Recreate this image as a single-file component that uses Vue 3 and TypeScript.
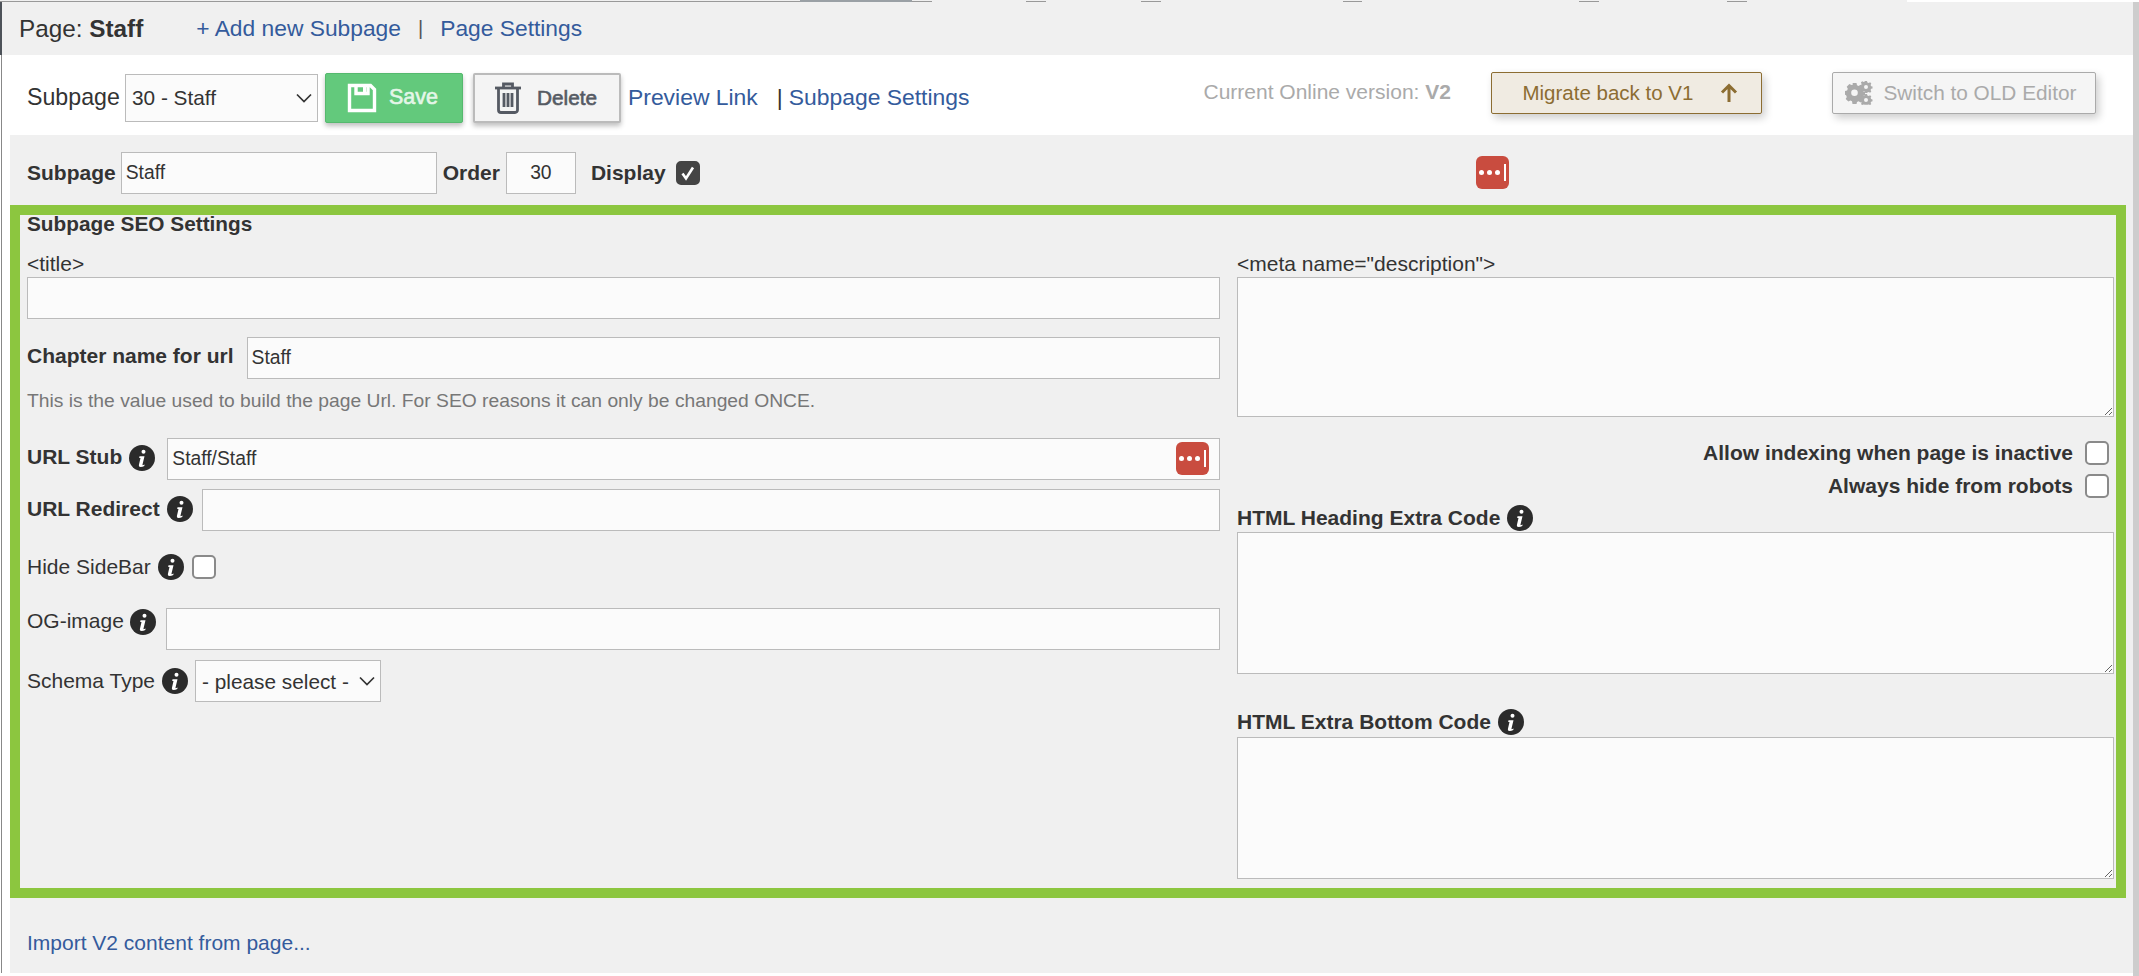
<script setup lang="ts">
interface Seg { width: number; color: string; height: number }
const strip: Seg[] = [
  { width: 800, color: '#999', height: 1 },
  { width: 112, color: '#9aa0a5', height: 2 },
  { width: 20, color: '#999', height: 1 },
  { width: 94, color: 'transparent', height: 1 },
  { width: 20, color: '#999', height: 1 },
  { width: 95, color: 'transparent', height: 1 },
  { width: 20, color: '#999', height: 1 },
  { width: 182, color: 'transparent', height: 1 },
  { width: 19, color: '#999', height: 1 },
  { width: 217, color: 'transparent', height: 1 },
  { width: 20, color: '#999', height: 1 },
  { width: 128, color: 'transparent', height: 1 },
  { width: 20, color: '#999', height: 1 },
  { width: 160, color: 'transparent', height: 1 },
  { width: 232, color: '#fff', height: 2 }
]
</script>

<template>
  <div class="shell">
    <div class="main">
      <div class="strip">
        <span v-for="(s, i) in strip" :key="i" :style="{ width: s.width + 'px', height: s.height + 'px', background: s.color }"></span>
      </div>
      <header class="head">
        <span class="page-name">Page: <b>Staff</b></span>
        <a class="link add">+ Add new Subpage</a>
        <span class="sep">|</span>
        <a class="link">Page Settings</a>
      </header>
      <div class="content">
        <div class="toolbar">
          <span class="tb-label">Subpage</span>
          <select class="sel sub-sel"><option>30 - Staff</option></select>
          <button class="btn save">
            <svg width="30" height="30" viewBox="0 0 30 30" fill="none" stroke="#fff" stroke-width="3.400">
              <path d="M2.500 2.500h21l4 4v21h-25z" />
              <path d="M9 2.500v8h12v-8" />
              <rect x="16" y="3" width="3" height="6" fill="#fff" stroke="none" />
            </svg>
            <span>Save</span>
          </button>
          <button class="btn del">
            <svg width="28" height="32" viewBox="0 0 28 32" fill="none" stroke="currentColor" stroke-width="2.8">
              <path d="M1 6h26" />
              <path d="M9.500 5V2h9v3" />
              <path d="M4.500 6.500v21.500a2.500 2.500 0 0 0 2.500 2.500h14a2.500 2.500 0 0 0 2.500-2.500V6.500" />
              <path d="M10 11v14M14 11v14M18 11v14" />
            </svg>
            <span>Delete</span>
          </button>
          <a class="link big preview">Preview Link</a>
          <span class="big pipe">|</span>
          <a class="link big">Subpage Settings</a>
          <span class="version">Current Online version: <b>V2</b></span>
          <button class="btn2 migrate">
            <span>Migrate back to V1</span>
            <svg width="20" height="20" viewBox="0 0 20 20" fill="none" stroke="currentColor" stroke-width="3">
              <path d="M10 19V3M3 9.500l7-7 7 7" />
            </svg>
          </button>
          <button class="btn2 switch">
            <svg width="28" height="24" viewBox="0 0 28 24" fill="currentColor">
              <path fill-rule="evenodd" d="M7.500 4h4l.5 2.200 1.600.7 2-1.100 2.700 2.800-1.100 1.900.7 1.700 2.100.5v3.800l-2.100.6-.7 1.600 1.100 2-2.700 2.700-2-1.100-1.600.7-.5 2.100h-4L7 22.200l-1.600-.7-2 1.100L.7 19.900l1.100-2-.7-1.600L0 15.700v-3.800l2.100-.5.700-1.700-1.100-1.900 2.700-2.800 2 1.100L8 5.400z M9.500 10.500a3.300 3.300 0 1 0 0 6.600 3.300 3.300 0 0 0 0-6.600z" transform="translate(0 -2)" />
              <path fill-rule="evenodd" d="M22 0l.4 1.500 1.300.5 1.400-.7 1.200 1.300-.7 1.300.5 1.300 1.400.4v1.800l-1.400.4-.5 1.300.7 1.300-1.200 1.300-1.400-.7-1.300.5L22 12h-1.800l-.4-1.500-1.300-.5-1.300.7-1.300-1.300.7-1.300-.5-1.300-1.200-.4V4.600l1.200-.4.5-1.300-.7-1.300 1.300-1.300 1.300.7 1.300-.5.400-1.500z M21 4a2 2 0 1 0 0 4 2 2 0 0 0 0-4z" />
              <path fill-rule="evenodd" d="M22 13l.4 1.400 1.300.5 1.400-.7 1.200 1.300-.7 1.300.5 1.300 1.400.4v1.800l-1.400.4-.5 1.200.7 1.100-1.200 1-1.400-.6-1.300.4H20l-1.500-.4-1.300.6-1.300-1 .7-1.100-.5-1.200-1.200-.4v-1.800l1.200-.4.5-1.300-.7-1.300 1.300-1.300 1.300.7 1.300-.5.400-1.400z M21 17a2 2 0 1 0 0 4 2 2 0 0 0 0-4z" />
            </svg>
            <span>Switch to OLD Editor</span>
          </button>
        </div>
        <div class="body">
          <div class="meta-row">
            <b class="lbl">Subpage</b>
            <input class="field name" value="Staff" />
            <b class="lbl order-lbl">Order</b>
            <input class="field order" value="30" />
            <b class="lbl display-lbl">Display</b>
            <span class="check on">
              <svg width="16" height="16" viewBox="0 0 16 16" fill="none" stroke="#fff" stroke-width="2.600"><path d="M2.500 8.500l3.500 5 7-11" /></svg>
            </span>
            <span class="dots meta-dots"><i></i><i></i><i></i><em></em></span>
          </div>
          <section class="seo">
            <h2>Subpage SEO Settings</h2>
            <div class="cols">
              <div class="col">
                <div class="lbl-line first">&lt;title&gt;</div>
                <input class="field wide tight" />
                <div class="row chapter">
                  <b class="lbl">Chapter name for url</b>
                  <input class="field grow" value="Staff" />
                </div>
                <p class="hint">This is the value used to build the page Url. For SEO reasons it can only be changed ONCE.</p>
                <div class="row stub">
                  <b class="lbl">URL Stub</b>
                  <svg class="info" viewBox="0 0 26 26"><circle cx="13" cy="13" r="13" /><circle cx="14.500" cy="6.800" r="2" fill="#fff" /><path d="M10.500 11.200h5l-2 8.300q-.2 1 .9.600l1.200-.5-.3 1.400q-2 1-3.600 1-2.300 0-1.700-2.500l1.500-6.600h-1.300z" fill="#fff" /></svg>
                  <div class="stub-wrap">
                    <input class="field wide" value="Staff/Staff" />
                    <span class="dots over"><i></i><i></i><i></i><em></em></span>
                  </div>
                </div>
                <div class="row redirect">
                  <b class="lbl">URL Redirect</b>
                  <svg class="info" viewBox="0 0 26 26"><circle cx="13" cy="13" r="13" /><circle cx="14.500" cy="6.800" r="2" fill="#fff" /><path d="M10.500 11.200h5l-2 8.300q-.2 1 .9.600l1.200-.5-.3 1.400q-2 1-3.600 1-2.300 0-1.700-2.500l1.500-6.600h-1.300z" fill="#fff" /></svg>
                  <input class="field grow" />
                </div>
                <div class="row hide">
                  <span class="lbl">Hide SideBar</span>
                  <svg class="info" viewBox="0 0 26 26"><circle cx="13" cy="13" r="13" /><circle cx="14.500" cy="6.800" r="2" fill="#fff" /><path d="M10.500 11.200h5l-2 8.300q-.2 1 .9.600l1.200-.5-.3 1.400q-2 1-3.600 1-2.300 0-1.700-2.500l1.500-6.600h-1.300z" fill="#fff" /></svg>
                  <span class="check"></span>
                </div>
                <div class="row og">
                  <span class="lbl">OG-image</span>
                  <svg class="info" viewBox="0 0 26 26"><circle cx="13" cy="13" r="13" /><circle cx="14.500" cy="6.800" r="2" fill="#fff" /><path d="M10.500 11.200h5l-2 8.300q-.2 1 .9.600l1.200-.5-.3 1.400q-2 1-3.600 1-2.300 0-1.700-2.500l1.500-6.600h-1.300z" fill="#fff" /></svg>
                  <input class="field grow" />
                </div>
                <div class="row schema">
                  <span class="lbl">Schema Type</span>
                  <svg class="info" viewBox="0 0 26 26"><circle cx="13" cy="13" r="13" /><circle cx="14.500" cy="6.800" r="2" fill="#fff" /><path d="M10.500 11.200h5l-2 8.300q-.2 1 .9.600l1.200-.5-.3 1.400q-2 1-3.600 1-2.300 0-1.700-2.500l1.500-6.600h-1.300z" fill="#fff" /></svg>
                  <select class="sel schema-sel"><option>- please select -</option></select>
                </div>
              </div>
              <div class="col">
                <div class="lbl-line first">&lt;meta name="description"&gt;</div>
                <textarea class="field area a1"></textarea>
                <div class="toggle t1"><b class="lbl">Allow indexing when page is inactive</b><span class="check"></span></div>
                <div class="toggle t2"><b class="lbl">Always hide from robots</b><span class="check"></span></div>
                <div class="row code c1">
                  <b class="lbl">HTML Heading Extra Code</b>
                  <svg class="info" viewBox="0 0 26 26"><circle cx="13" cy="13" r="13" /><circle cx="14.500" cy="6.800" r="2" fill="#fff" /><path d="M10.500 11.200h5l-2 8.300q-.2 1 .9.600l1.200-.5-.3 1.400q-2 1-3.600 1-2.300 0-1.700-2.500l1.500-6.600h-1.300z" fill="#fff" /></svg>
                </div>
                <textarea class="field area a2"></textarea>
                <div class="row code c2">
                  <b class="lbl">HTML Extra Bottom Code</b>
                  <svg class="info" viewBox="0 0 26 26"><circle cx="13" cy="13" r="13" /><circle cx="14.500" cy="6.800" r="2" fill="#fff" /><path d="M10.500 11.200h5l-2 8.300q-.2 1 .9.600l1.200-.5-.3 1.400q-2 1-3.600 1-2.300 0-1.700-2.500l1.500-6.600h-1.300z" fill="#fff" /></svg>
                </div>
                <textarea class="field area a3"></textarea>
              </div>
            </div>
          </section>
          <div class="foot"><a class="link import">Import V2 content from page...</a></div>
        </div>
      </div>
    </div>
    <div class="rail"></div>
  </div>
</template>

<style>
html, body { margin: 0; background: #fff; overflow: hidden; }
</style>

<style scoped>
.shell {
  display: flex;
  width: 2139px;
  height: 976px;
  overflow: hidden;
  font-family: "Liberation Sans", Arial, sans-serif;
  font-size: 21px;
  color: #333;
}
.main { width: 2133px; flex: none; }
.rail { width: 6px; flex: none; background: #cdcdcd; margin-top: 2px; }
.strip { display: flex; align-items: flex-end; height: 2px; background: #f0f0f0; }
.strip span { display: block; flex: none; }
.head {
  height: 53px;
  background: #f0f0f0;
  border-left: 2px solid #4d5259;
  box-sizing: border-box;
  padding-left: 17px;
  display: flex;
  align-items: center;
  font-size: 22.800px;
}
.page-name { color: #333; font-size: 24.300px; }
.add { margin-left: 53px; }
.sep { margin: 0 17px 0 17px; font-size: 20px; color: #555; }
.link { color: #345b9c; text-decoration: none; }
.content { border-left: 1px solid #888; margin-left: 1px; }
.toolbar {
  height: 80px;
  box-sizing: border-box;
  display: flex;
  align-items: center;
  padding: 5px 0 0 25px;
  background: #fff;
}
.tb-label { font-size: 23.200px; width: 98px; flex: none; }
.sel {
  height: 48px;
  box-sizing: border-box;
  border: 1px solid #bbb;
  background-color: #fbfbfb;
  background-image: url("data:image/svg+xml,%3Csvg xmlns='http://www.w3.org/2000/svg' width='16' height='10' viewBox='0 0 16 10'%3E%3Cpath d='M1 1.500l7 7 7-7' fill='none' stroke='%23333' stroke-width='1.700'/%3E%3C/svg%3E");
  background-repeat: no-repeat;
  background-position: right 5px center;
  appearance: none;
  font-family: "Liberation Sans", Arial, sans-serif;
  font-size: 20.800px;
  color: #333;
  border-radius: 0;
  padding: 0 24px 0 6px;
}
.sub-sel { width: 193px; flex: none; }
.btn {
  height: 50px;
  box-sizing: border-box;
  display: flex;
  align-items: center;
  font-family: "Liberation Sans", Arial, sans-serif;
  font-weight: normal;
  border-radius: 2px;
  box-shadow: 0 3px 5px rgba(0, 0, 0, .25);
  padding: 0;
  flex: none;
}
.save {
  width: 138px;
  margin-left: 7px;
  background: #63c97c;
  border: 1px solid #55b96e;
  color: #e4f6e8;
  padding-left: 21px;
  gap: 12px;
  font-size: 21.500px;
  -webkit-text-stroke: .6px #e4f6e8;
}
.del {
  width: 148px;
  margin-left: 10px;
  background: #f4f4f4;
  border: 2px solid #bbb;
  color: #555a63;
  padding-left: 19px;
  gap: 15px;
  font-size: 20.800px;
  -webkit-text-stroke: .6px #555a63;
}
.big { font-size: 22.900px; }
.preview { margin-left: 7px; }
.pipe { margin-left: 19px; margin-right: 6px; color: #333; }
.version { margin-left: 234px; color: #aaa; font-size: 21px; margin-top: -12px; width: 288px; flex: none; white-space: nowrap; }
.btn2 {
  height: 42px;
  margin-top: -9px;
  box-sizing: border-box;
  display: flex;
  align-items: center;
  font-family: "Liberation Sans", Arial, sans-serif;
  font-size: 20.800px;
  border-radius: 2px;
  box-shadow: 3px 4px 9px rgba(0, 0, 0, .2);
  flex: none;
}
.migrate {
  width: 271px;
  background: #f0ebe2;
  border: 1px solid #8c6d32;
  color: #8c6d32;
  padding: 0 0 0 30px;
  font-size: 20.500px;
  gap: 26px;
}
.switch {
  width: 264px;
  margin-left: 70px;
  background: #f5f5f5;
  border: 1px solid #aaa;
  color: #aaa;
  padding: 0 0 0 12px;
  gap: 10px;
}
.body { margin-left: 8px; background: #f0f0f0; height: 838px; }
.meta-row {
  height: 70px;
  box-sizing: border-box;
  display: flex;
  align-items: center;
  padding: 5px 0 0 17px;
}
.lbl { font-size: 21px; white-space: nowrap; flex: none; }
.field {
  height: 42px;
  box-sizing: border-box;
  border: 1px solid #bbb;
  background: #fbfbfb;
  font-family: "Liberation Sans", Arial, sans-serif;
  font-size: 19.300px;
  color: #333;
  border-radius: 0;
  padding: 0 4px;
  outline: none;
  display: block;
}
.name { width: 316px; margin-left: 5px; }
.order-lbl { margin-left: 6px; }
.order { width: 70px; margin-left: 6px; text-align: center; }
.display-lbl { margin-left: 15px; }
.check {
  width: 24px;
  height: 24px;
  box-sizing: border-box;
  flex: none;
  border: 2px solid #8a8a8a;
  border-radius: 5px;
  background: #fff;
  display: inline-flex;
  align-items: center;
  justify-content: center;
}
.check.on { background: #444; border-color: #444; margin-left: 10px; }
.dots {
  width: 33px;
  height: 33px;
  flex: none;
  box-sizing: border-box;
  border-radius: 6px;
  background: #c94c3f;
  display: inline-flex;
  align-items: center;
  justify-content: center;
  gap: 3px;
}
.dots i { width: 5px; height: 5px; border-radius: 50%; background: #fff; display: block; }
.dots em { width: 2px; height: 17px; background: #fff; display: block; margin-left: 1px; }
.meta-dots { margin-left: 776px; }
.seo {
  width: 2116px;
  height: 693px;
  box-sizing: border-box;
  border: 10px solid #8cc63f;
  padding: 0 2px 0 7px;
}
h2 { margin: 0; font-size: 20.800px; line-height: 18px; height: 18px; color: #333; }
.cols { display: grid; grid-template-columns: 1193px 877px; column-gap: 17px; }
.col { min-width: 0; }
.lbl-line { font-size: 21px; line-height: 24px; }
.first { margin-top: 19px; margin-bottom: 1px; }
.wide { width: 100%; }
.row { display: flex; align-items: center; }
.grow { flex: 1; min-width: 0; }
.info { width: 26px; height: 26px; flex: none; fill: #2b2b2b; }
.chapter { margin-top: 18px; gap: 13px; }
.chapter .lbl { margin-top: -4px; }
.hint { margin: 10px 0 0; font-size: 19.270px; line-height: 24px; color: #777; height: 24px; white-space: nowrap; }
.stub { margin-top: 25px; }
.stub .lbl { margin-top: -4px; }
.stub .info { margin-left: 7px; margin-top: -2px; }
.stub-wrap { position: relative; flex: 1; margin-left: 12px; }
.over { position: absolute; top: 4px; right: 11px; }
.redirect { margin-top: 9px; }
.redirect .lbl { margin-top: -2px; }
.redirect .info { margin-left: 7px; margin-top: -2px; }
.redirect .grow { margin-left: 9px; }
.hide { margin-top: 23px; height: 26px; }
.hide .info { margin-left: 7px; }
.hide .check { margin-left: 8px; }
.og { margin-top: 28px; align-items: flex-start; }
.og .lbl { line-height: 24px; margin-top: 1px; }
.og .info { margin-left: 6px; margin-top: 1px; }
.og .grow { margin-left: 10px; }
.schema { margin-top: 10px; }
.schema .info { margin-left: 7px; }
.schema-sel { width: 186px; margin-left: 7px; height: 42px; flex: none; }
.area { width: 100%; resize: vertical; }
.a1 { height: 140px; }
.a2 { height: 142px; margin-top: 1px; }
.a3 { height: 142px; margin-top: 2px; }
.toggle { display: flex; align-items: center; justify-content: flex-end; height: 24px; gap: 12px; padding-right: 5px; }
.t1 { margin-top: 24px; }
.t2 { margin-top: 9px; }
.code { gap: 7px; height: 26px; }
.c1 { margin-top: 7px; }
.c2 { margin-top: 35px; }
.foot { height: 75px; box-sizing: border-box; padding: 33px 0 0 17px; line-height: 24px; }
</style>
